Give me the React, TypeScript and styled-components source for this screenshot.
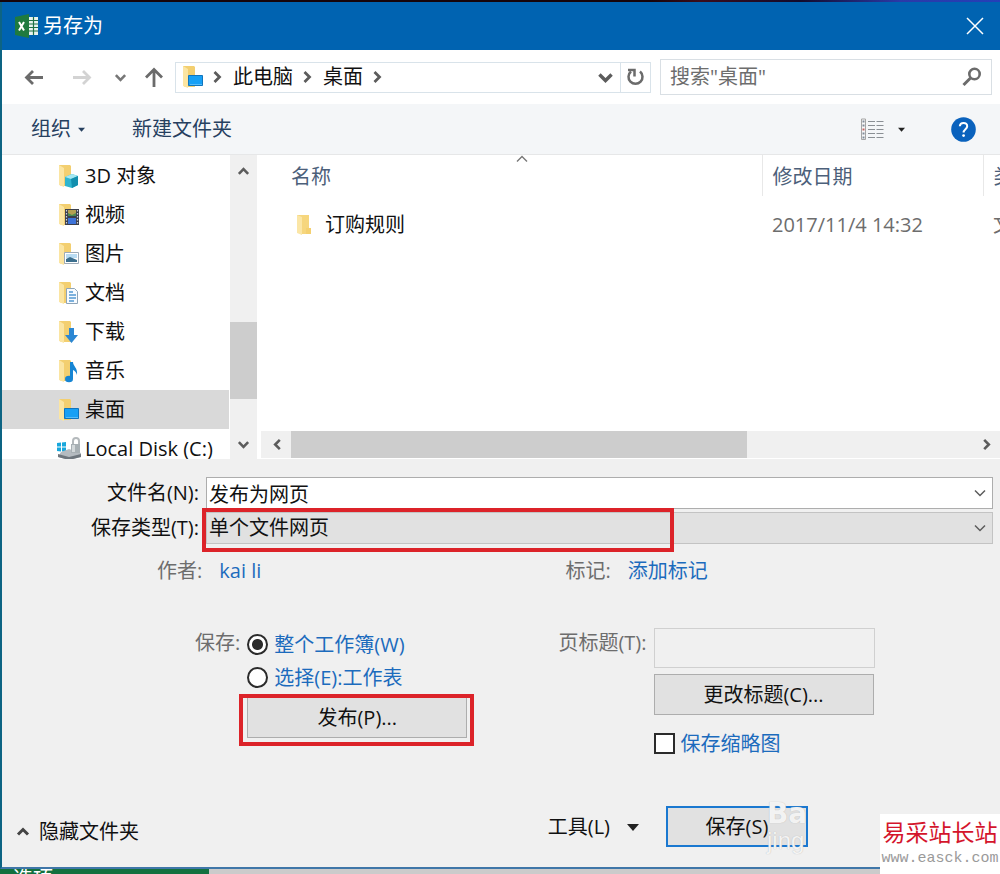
import React from "react";
import styled, { createGlobalStyle } from "styled-components";

const GlobalStyle = createGlobalStyle`
  * { box-sizing: border-box; }
  body {
    margin: 0;
    background: #cfcfcf;
    color: #111;
    font-family: "Open Sans", "Noto Sans CJK SC", sans-serif;
    font-size: 20px;
    line-height: 30px;
  }
  button, input, select { font: inherit; color: inherit; border-radius: 0; margin: 0; }
  button { padding: 0; border: 0; background: none; white-space: nowrap; }
  svg { display: block; flex: none; }
`;

const Screen = styled.div`
  display: flex;
  flex-direction: column;
  min-height: 100vh;
  overflow: hidden;
`;
const TopStrip = styled.div`
  height: 2px;
  background: linear-gradient(90deg, #16040a 0 65%, #3a0d1c 70%, #120b2c 80%, #2a3aa8 90%, #2440b8);
`;
const Window = styled.main`
  flex: 1;
  display: flex;
  flex-direction: column;
  border-left: 2px solid #0d6483;
  border-bottom: 2px solid #3f76a8;
  background: #f0f0f0;
`;
const TitleBar = styled.header`
  display: flex;
  align-items: center;
  gap: 4px;
  height: 48px;
  padding: 0 16px 0 12px;
  background: #0063b1;
  color: #fff;
`;
const Title = styled.h1`
  flex: 1;
  margin: 0;
  font-size: 20px;
  font-weight: 400;
`;
const NavBar = styled.nav`
  display: flex;
  align-items: center;
  height: 54px;
  padding: 0 8px 0 22px;
  background: #fff;
`;
const NavButton = styled.button<{ $gap: number }>`
  margin-right: ${(p) => p.$gap}px;
`;
const AddressBar = styled.div`
  flex: 1;
  display: flex;
  align-items: center;
  height: 31px;
  margin-right: 9px;
  padding-left: 5px;
  border: 1px solid #d9e3ea;
`;
const AddressIcon = styled.span`
  margin-right: 4px;
`;
const Crumb = styled.button`
  margin: 0 7px 0 9px;
`;
const Refresh = styled.button`
  display: grid;
  place-items: center;
  align-self: stretch;
  width: 30px;
  margin-left: 6px;
  border-left: 1px solid #d9e3ea;
`;
const SearchBox = styled.div`
  flex: 0 0 332px;
  display: flex;
  align-items: center;
  height: 36px;
  padding: 0 9px;
  border: 1px solid #d9dfe4;
`;
const SearchInput = styled.input`
  flex: 1;
  min-width: 0;
  padding: 0;
  border: 0;
  outline: 0;
  background: none;
  &::placeholder { color: #6d6d6d; opacity: 1; }
`;
const Toolbar = styled.div`
  display: flex;
  align-items: center;
  height: 51px;
  padding: 0 24px 0 29px;
  border-bottom: 1px solid #e6e7e8;
  background: #f4f6f8;
  color: #26405f;
`;
const ToolButton = styled.button<{ $gap: number }>`
  display: flex;
  align-items: center;
  gap: 7px;
  margin-right: ${(p) => p.$gap}px;
`;
const Spacer = styled.span`
  flex: 1;
`;

const Panes = styled.section`
  display: flex;
  height: 304px;
  background: #fff;
`;
const Tree = styled.ul`
  flex: 0 0 227px;
  margin: 0;
  padding: 1px 0 0;
  overflow: hidden;
  list-style: none;
`;
const TreeItem = styled.li<{ $selected?: boolean }>`
  display: flex;
  align-items: center;
  gap: 3px;
  height: 39px;
  padding-left: 55px;
  white-space: nowrap;
  background: ${(p) => (p.$selected ? "#d9d9d9" : "transparent")};
`;
const VScroll = styled.div`
  display: flex;
  flex-direction: column;
  align-items: center;
  justify-content: space-between;
  width: 27px;
  margin-left: 1px;
  padding: 10px 0 8px;
  background: #f0f0f0;
`;
const VTrack = styled.div`
  flex: 1;
  display: flex;
  align-items: flex-end;
  padding-bottom: 39px;
`;
const VThumb = styled.div`
  width: 27px;
  height: 77px;
  background: #cdcdcd;
`;
const Listing = styled.div`
  flex: 1;
  min-width: 0;
  display: flex;
  flex-direction: column;
  padding: 0 0 1px 4px;
  position: relative;
`;
const SortMark = styled.span`
  position: absolute;
  left: 34.7%;
  top: -3px;
`;
const FileTable = styled.table`
  width: 100%;
  table-layout: fixed;
  border-collapse: collapse;
  white-space: nowrap;
`;
const HeadCell = styled.th<{ $width?: number }>`
  width: ${(p) => (p.$width ? `${p.$width}px` : "auto")};
  height: 41px;
  padding: 2px 0 0 10px;
  overflow: hidden;
  border-right: 1px solid #e8e8e8;
  color: #4c607a;
  font-weight: 400;
  text-align: left;
  &:first-child { padding-left: 30px; }
  &:last-child { border-right: 0; }
`;
const Cell = styled.td`
  height: 58px;
  padding: 0 0 0 10px;
  overflow: hidden;
  color: #6d6d6d;
  &:first-child { padding-left: 34px; color: #111; }
`;
const FileName = styled.span`
  display: flex;
  align-items: center;
  gap: 12px;
`;
const HScroll = styled.div`
  display: flex;
  align-items: center;
  height: 27px;
  margin-top: auto;
  padding: 0 7px 0 10px;
  background: #f0f0f0;
`;
const HTrack = styled.div`
  flex: 1;
  align-self: stretch;
  margin: 0 8px 0 7px;
`;
const HThumb = styled.div`
  width: 67%;
  height: 100%;
  background: #cdcdcd;
`;

const Form = styled.form`
  flex: 1;
  display: flex;
  flex-direction: column;
  padding-top: 18px;
`;
const Fields = styled.div`
  display: grid;
  grid-template-columns: 197px 1fr;
  column-gap: 7px;
  row-gap: 3px;
  align-items: center;
  padding-right: 7px;
`;
const FieldLabel = styled.label`
  text-align: right;
  white-space: nowrap;
`;
const Combo = styled.div`
  position: relative;
  display: grid;
  align-items: center;
  & > input, & > select, & > svg { grid-area: 1 / 1; }
  & > svg { justify-self: end; margin-right: 6px; pointer-events: none; }
`;
const NameInput = styled.input`
  width: 100%;
  height: 32px;
  padding: 0 30px 0 2px;
  border: 1px solid #adadad;
  background: #fff;
  outline: 0;
`;
const TypeSelect = styled.select`
  appearance: none;
  width: 100%;
  height: 32px;
  padding: 0 30px 0 2px;
  border: 1px solid #c3c3c3;
  background: #e1e1e1;
  outline: 0;
`;
const TypeMark = styled.span`
  position: absolute;
  inset: -4px auto -8px -4px;
  width: 60%;
  border: 4px solid #dc2329;
  pointer-events: none;
`;
const Split = styled.div<{ $top: number }>`
  display: grid;
  grid-template-columns: 5fr 4fr;
  margin-top: ${(p) => p.$top}px;
`;
const Meta = styled.div<{ $indent: number }>`
  display: flex;
  gap: 17px;
  padding-left: ${(p) => p.$indent}px;
  color: #6d6d6d;
`;
const Link = styled.a`
  color: #1c6bbd;
  text-decoration: none;
`;
const Group = styled.div<{ $indent: number; $gap: number }>`
  display: flex;
  align-items: flex-start;
  gap: ${(p) => p.$gap}px;
  padding-left: ${(p) => p.$indent}px;
`;
const GroupLabel = styled.label`
  color: #6d6d6d;
  white-space: nowrap;
`;
const Options = styled.div`
  display: flex;
  flex-direction: column;
  align-items: flex-start;
`;
const Choice = styled.label`
  display: flex;
  align-items: center;
  gap: 6px;
  height: 33px;
  color: #1c6bbd;
  white-space: nowrap;
`;
const Radio = styled.input`
  appearance: none;
  width: 21px;
  height: 21px;
  border: 2px solid #2b2b2b;
  border-radius: 50%;
  background: #fff;
  &:checked { background: radial-gradient(circle, #2b2b2b 5px, #fff 6px); }
`;
const Check = styled.input`
  appearance: none;
  width: 21px;
  height: 21px;
  border: 2px solid #2b2b2b;
  background: #fff;
`;
const PublishWrap = styled.div`
  position: relative;
  margin-top: 3px;
`;
const PublishMark = styled.span`
  position: absolute;
  inset: -3px -7px -8px -8px;
  border: 4px solid #dc2329;
  pointer-events: none;
`;
const PushButton = styled.button<{ $primary?: boolean }>`
  width: ${(p) => (p.$primary ? 142 : 220)}px;
  height: 41px;
  border: ${(p) => (p.$primary ? "2px solid #1a78d0" : "1px solid #adadad")};
  background: #e1e1e1;
`;
const TitleInput = styled.input`
  width: 221px;
  height: 40px;
  margin-bottom: 6px;
  border: 1px solid #d0d0d0;
  background: #f0f0f0;
`;
const CheckRow = styled(Choice)`
  margin-top: 12px;
`;
const Footer = styled.footer`
  display: flex;
  align-items: center;
  margin-top: auto;
  padding: 0 192px 20px 14px;
`;
const FooterButton = styled.button<{ $gap: number; $low?: boolean }>`
  display: flex;
  align-items: center;
  align-self: ${(p) => (p.$low ? "flex-end" : "center")};
  gap: ${(p) => p.$gap}px;
`;
const SaveWrap = styled.div`
  position: relative;
  margin-left: 27px;
`;
const Watermark = styled.div`
  position: absolute;
  left: 101px;
  top: -6px;
  color: rgba(255, 255, 255, 0.85);
  line-height: 27px;
  text-shadow: 0 0 1px #b0b0b0;
  pointer-events: none;
`;
const Mark = styled.div<{ $bold?: boolean }>`
  font-family: ${(p) => (p.$bold ? "DejaVu Sans" : "Liberation Sans")}, sans-serif;
  font-size: ${(p) => (p.$bold ? 28 : 24)}px;
  font-weight: ${(p) => (p.$bold ? 700 : 400)};
`;
const BehindBar = styled.div`
  display: flex;
  height: 5px;
  overflow: hidden;
  background: #cbcbcb;
`;
const BehindTab = styled.span`
  width: 209px;
  padding-left: 13px;
  background: #13703f;
  color: #fff;
  line-height: 20px;
`;
const SiteBadge = styled.aside`
  position: absolute;
  right: 0;
  bottom: 0;
  width: 120px;
  height: 60px;
  padding-top: 3px;
  overflow: hidden;
  background: #fff;
  text-align: center;
  white-space: nowrap;
`;
const SiteName = styled.div`
  color: #d4152c;
  font-size: 23px;
  font-weight: 400;
  line-height: 30px;
`;
const SiteUrl = styled.div`
  color: #9a9a9a;
  font-family: "Liberation Mono", monospace;
  font-size: 15px;
  line-height: 24px;
`;
const Frame = styled.div`
  position: relative;
`;

type ChevronProps = { dir: "up" | "down" | "left" | "right"; size?: number; weight?: number; color?: string };
const chevrons = {
  up: "M2 9.500 7 4.500l5 5",
  down: "M2 4.500l5 5 5-5",
  left: "M9.500 2l-5 5 5 5",
  right: "M4.500 2l5 5-5 5",
};
function Chevron({ dir, size = 14, weight = 2.8, color = "#5c5c5c" }: ChevronProps) {
  return (
    <svg width={size} height={size} viewBox="0 0 14 14" fill="none" stroke={color} strokeWidth={weight}>
      <path d={chevrons[dir]} />
    </svg>
  );
}
function Caret({ size, color = "#222" }: { size: number; color?: string }) {
  return (
    <svg width={size} height={size} viewBox="0 0 12 12">
      <path d="M0 3h12L6 10z" fill={color} />
    </svg>
  );
}
function Arrow({ dir, color }: { dir: "left" | "right" | "up"; color: string }) {
  const d = {
    left: "M19 10.500H3M9 4l-6.500 6.500L9 17",
    right: "M1 10.500h16M11 4l6.500 6.500L11 17",
    up: "M10 20V3M2 10.500l8-8 8 8",
  }[dir];
  return (
    <svg width="20" height="20" viewBox="0 0 20 20" fill="none" stroke={color} strokeWidth="2.8">
      <path d={d} />
    </svg>
  );
}

type Kind = "cube" | "video" | "picture" | "document" | "download" | "music" | "desktop";
const overlays: Record<Kind, React.ReactNode> = {
  cube: (
    <>
      <path d="M8 13l7-3 6 2v9l-6 3-7-2z" fill="#2fb5cf" />
      <path d="M8 13l7-3 6 2-7 3z" fill="#a5e8f2" />
      <path d="M14 15l7-3v9l-6 3z" fill="#128fae" />
    </>
  ),
  video: (
    <>
      <path d="M8 6h14v16H8z" fill="#3b3f4c" />
      <path d="M11 7h8v6h-8z" fill="#b4a052" />
      <path d="M11 15h8v6h-8z" fill="#3d73d8" />
      <path d="M11 10l4 2 4-2v3h-8z" fill="#4b8a52" />
      <path d="M9.500 7v15M20.500 7v15" stroke="#cfd3dc" strokeWidth="1.200" strokeDasharray="1.500 1.500" />
    </>
  ),
  picture: (
    <>
      <path d="M7.500 10.500h14v11h-14z" fill="#fff" stroke="#9eabb8" />
      <path d="M9 12h11v4H9z" fill="#b9dcf3" />
      <path d="M9 17l4-2 7 3v2H9z" fill="#3b6f8e" />
    </>
  ),
  document: (
    <>
      <path d="M9.500 7.500h8l3 3v12h-11z" fill="#f7fbff" stroke="#8fa5b8" />
      <path d="M12 11h4M12 14h7M12 17h7M12 20h5" stroke="#5499d2" strokeWidth="1.500" />
    </>
  ),
  download: <path d="M12 8h5v7h4l-6.500 8L8 15h4z" fill="#2b87d3" />,
  music: (
    <>
      <ellipse cx="12" cy="20" rx="4" ry="3.200" fill="#1685d3" />
      <path d="M13 3h3c0 4 5 6 4 13-1-3-2-4-4-5v9h-3z" fill="#1685d3" />
    </>
  ),
  desktop: (
    <>
      <path d="M7.500 10.500h14v10h-14z" fill="#17a0f5" stroke="#1175bd" />
      <path d="M9 19.500h12" stroke="#56bdf9" />
    </>
  ),
};
function FolderIcon({ kind }: { kind: Kind }) {
  return (
    <svg width="25" height="24" viewBox="0 0 25 24">
      <path d="M2 1h11l1 1v20H4l-2-2z" fill="#f3cf70" />
      <path d="M2 1l5 3v19l-5-2z" fill="#fbe5a2" />
      {overlays[kind]}
    </svg>
  );
}
function DiskIcon() {
  return (
    <svg width="25" height="24" viewBox="0 0 25 24">
      <path d="M0 6l4-.5v4H0zM5 5.400l4-.5v4.600H5zM0 10.500h4v4l-4-.5zM5 10.500h4v4.600l-4-.5z" fill="#18a7dc" />
      <path d="M4 15l8-3 12 4v4l-12 3-11-3z" fill="#b5bbc0" />
      <path d="M1 17l11 3 12-3v3l-12 3-11-3z" fill="#6e767d" />
      <path d="M16 8V4c0-4 6-4 6 0v4" fill="none" stroke="#b4b9bc" strokeWidth="2" />
      <path d="M14 7h9v9h-9z" fill="#a8b0b4" />
      <path d="M15 8h3v7h-3z" fill="#d3d8da" />
    </svg>
  );
}
function ClosedFolderIcon() {
  return (
    <svg width="18" height="22" viewBox="0 0 18 22">
      <path d="M2 1h12v13l2 1v5H5z" fill="#f6d67d" />
      <path d="M2 1l5 2v18l-5-2z" fill="#fbe6a6" />
      <path d="M11 14h5v6h-5z" fill="#f4d070" />
    </svg>
  );
}
function ExcelIcon() {
  return (
    <svg width="25" height="24" viewBox="0 0 25 24">
      <path d="M14 3h10v18H14z" fill="#e9f4ee" />
      <path d="M14 6.500h10M14 10h10M14 13.500h10M14 17h10M19.500 3v18" stroke="#1f7145" strokeWidth="1.200" />
      <path d="M1 3l14-3v24L1 21z" fill="#1f7a3f" />
      <path d="M5 8l5 8.500M10 8l-5 8.500" stroke="#fff" strokeWidth="2" />
    </svg>
  );
}
function ViewIcon() {
  const rows = [3, 7, 11, 15, 19];
  return (
    <svg width="24" height="23" viewBox="0 0 24 23" fill="none">
      <path d="M1.500 1h4v20.500h-4z" fill="#f7f7f7" stroke="#a5a5a5" />
      {rows.map((y) => (
        <g key={y}>
          <path d={`M8 ${y}.5h7M16.500 ${y}.5h7`} stroke="#8a8f94" strokeWidth="1.200" />
          <path d={`M2.500 ${y}.5h2`} stroke={y === 11 ? "#c76262" : "#7f8b99"} strokeWidth="2" />
        </g>
      ))}
    </svg>
  );
}

const folders: { name: string; kind: Kind }[] = [
  { name: "3D 对象", kind: "cube" },
  { name: "视频", kind: "video" },
  { name: "图片", kind: "picture" },
  { name: "文档", kind: "document" },
  { name: "下载", kind: "download" },
  { name: "音乐", kind: "music" },
  { name: "桌面", kind: "desktop" },
];

export default function App() {
  return (
    <Frame>
      <GlobalStyle />
      <Screen>
        <TopStrip />
        <Window>
          <TitleBar>
            <ExcelIcon />
            <Title>另存为</Title>
            <button aria-label="关闭">
              <svg width="18" height="18" viewBox="0 0 18 18" stroke="#fff" strokeWidth="1.500">
                <path d="M1 1l16 16M17 1 1 17" />
              </svg>
            </button>
          </TitleBar>

          <NavBar>
            <NavButton $gap={28} aria-label="后退"><Arrow dir="left" color="#6b6b6b" /></NavButton>
            <NavButton $gap={22} aria-label="前进"><Arrow dir="right" color="#d3d3d3" /></NavButton>
            <NavButton $gap={17} aria-label="最近"><Chevron dir="down" size={13} color="#777" /></NavButton>
            <NavButton $gap={11} aria-label="上移"><Arrow dir="up" color="#6b6b6b" /></NavButton>
            <AddressBar>
              <AddressIcon><FolderIcon kind="desktop" /></AddressIcon>
              <Chevron dir="right" />
              <Crumb>此电脑</Crumb>
              <Chevron dir="right" />
              <Crumb>桌面</Crumb>
              <Chevron dir="right" />
              <Spacer />
              <Chevron dir="down" size={17} />
              <Refresh aria-label="刷新">
                <svg width="19" height="20" viewBox="0 0 19 20" fill="none" stroke="#6b6b6b" strokeWidth="2.500">
                  <path d="M14 4.500a7 7 0 1 1-9 0" />
                  <path d="M2 3h6.500v6.500" />
                </svg>
              </Refresh>
            </AddressBar>
            <SearchBox>
              <SearchInput aria-label="搜索" placeholder={'搜索"桌面"'} />
              <svg width="20" height="20" viewBox="0 0 20 20" fill="none" stroke="#6b6b6b">
                <circle cx="12.500" cy="7" r="5.200" strokeWidth="2.600" />
                <path d="M8.500 11 1.500 18" strokeWidth="3" />
              </svg>
            </SearchBox>
          </NavBar>

          <Toolbar>
            <ToolButton $gap={47}>组织<Caret size={7} color="#26405f" /></ToolButton>
            <ToolButton $gap={0}>新建文件夹</ToolButton>
            <Spacer />
            <ToolButton $gap={14} aria-label="视图"><ViewIcon /></ToolButton>
            <ToolButton $gap={46} aria-label="更多选项"><Caret size={7} /></ToolButton>
            <ToolButton $gap={0} aria-label="帮助">
              <svg width="25" height="25" viewBox="0 0 25 25" fill="none">
                <circle cx="12.500" cy="12.500" r="12.300" fill="#0a62bd" />
                <path d="M8.800 9.300c.3-4.600 7.700-4.400 7.400.1-.2 2.700-3.600 3-3.600 6.100" stroke="#fff" strokeWidth="2" />
                <circle cx="12.600" cy="18.600" r="1.400" fill="#fff" />
              </svg>
            </ToolButton>
          </Toolbar>

          <Panes>
            <Tree>
              {folders.map((f) => (
                <TreeItem key={f.kind} $selected={f.kind === "desktop"}>
                  <FolderIcon kind={f.kind} />
                  {f.name}
                </TreeItem>
              ))}
              <TreeItem><DiskIcon />Local Disk (C:)</TreeItem>
            </Tree>
            <VScroll>
              <Chevron dir="up" size={13} />
              <VTrack><VThumb /></VTrack>
              <Chevron dir="down" size={13} />
            </VScroll>
            <Listing>
              <SortMark><Chevron dir="up" weight={1.4} color="#777" /></SortMark>
              <FileTable>
                <thead>
                  <tr>
                    <HeadCell>名称</HeadCell>
                    <HeadCell $width={221}>修改日期</HeadCell>
                    <HeadCell $width={17}>类型</HeadCell>
                  </tr>
                </thead>
                <tbody>
                  <tr>
                    <Cell><FileName><ClosedFolderIcon />订购规则</FileName></Cell>
                    <Cell>2017/11/4 14:32</Cell>
                    <Cell>文件夹</Cell>
                  </tr>
                </tbody>
              </FileTable>
              <HScroll>
                <Chevron dir="left" size={13} />
                <HTrack><HThumb /></HTrack>
                <Chevron dir="right" size={13} />
              </HScroll>
            </Listing>
          </Panes>

          <Form onSubmit={(e) => e.preventDefault()}>
            <Fields>
              <FieldLabel htmlFor="name">文件名(N):</FieldLabel>
              <Combo>
                <NameInput id="name" defaultValue="发布为网页" />
                <Chevron dir="down" weight={1.5} />
              </Combo>
              <FieldLabel htmlFor="type">保存类型(T):</FieldLabel>
              <Combo>
                <TypeSelect id="type"><option>单个文件网页</option></TypeSelect>
                <Chevron dir="down" weight={1.5} />
                <TypeMark />
              </Combo>
            </Fields>

            <Split $top={12}>
              <Meta $indent={155}>作者:<Link href="#author">kai li</Link></Meta>
              <Meta $indent={9}>标记:<Link href="#tags">添加标记</Link></Meta>
            </Split>

            <Split $top={42}>
              <Group $indent={193} $gap={7}>
                <GroupLabel as="span">保存:</GroupLabel>
                <Options>
                  <Choice><Radio type="radio" name="scope" defaultChecked />整个工作簿(W)</Choice>
                  <Choice><Radio type="radio" name="scope" />选择(E):工作表</Choice>
                  <PublishWrap>
                    <PushButton type="button">发布(P)...</PushButton>
                    <PublishMark />
                  </PublishWrap>
                </Options>
              </Group>
              <Group $indent={2} $gap={7}>
                <GroupLabel htmlFor="page-title">页标题(T):</GroupLabel>
                <Options>
                  <TitleInput id="page-title" disabled />
                  <PushButton type="button">更改标题(C)...</PushButton>
                  <CheckRow><Check type="checkbox" />保存缩略图</CheckRow>
                </Options>
              </Group>
            </Split>

            <Footer>
              <FooterButton type="button" $gap={9} $low><Chevron dir="up" weight={3} color="#444" />隐藏文件夹</FooterButton>
              <Spacer />
              <FooterButton type="button" $gap={17}>工具(L)<Caret size={12} /></FooterButton>
              <SaveWrap>
                <PushButton $primary>保存(S)</PushButton>
                <Watermark aria-hidden="true">
                  <Mark $bold>Ba</Mark>
                  <Mark>jing</Mark>
                </Watermark>
              </SaveWrap>
            </Footer>
          </Form>
        </Window>
        <BehindBar><BehindTab>选项</BehindTab></BehindBar>
      </Screen>
      <SiteBadge>
        <SiteName>易采站长站</SiteName>
        <SiteUrl>www.easck.com</SiteUrl>
      </SiteBadge>
    </Frame>
  );
}
